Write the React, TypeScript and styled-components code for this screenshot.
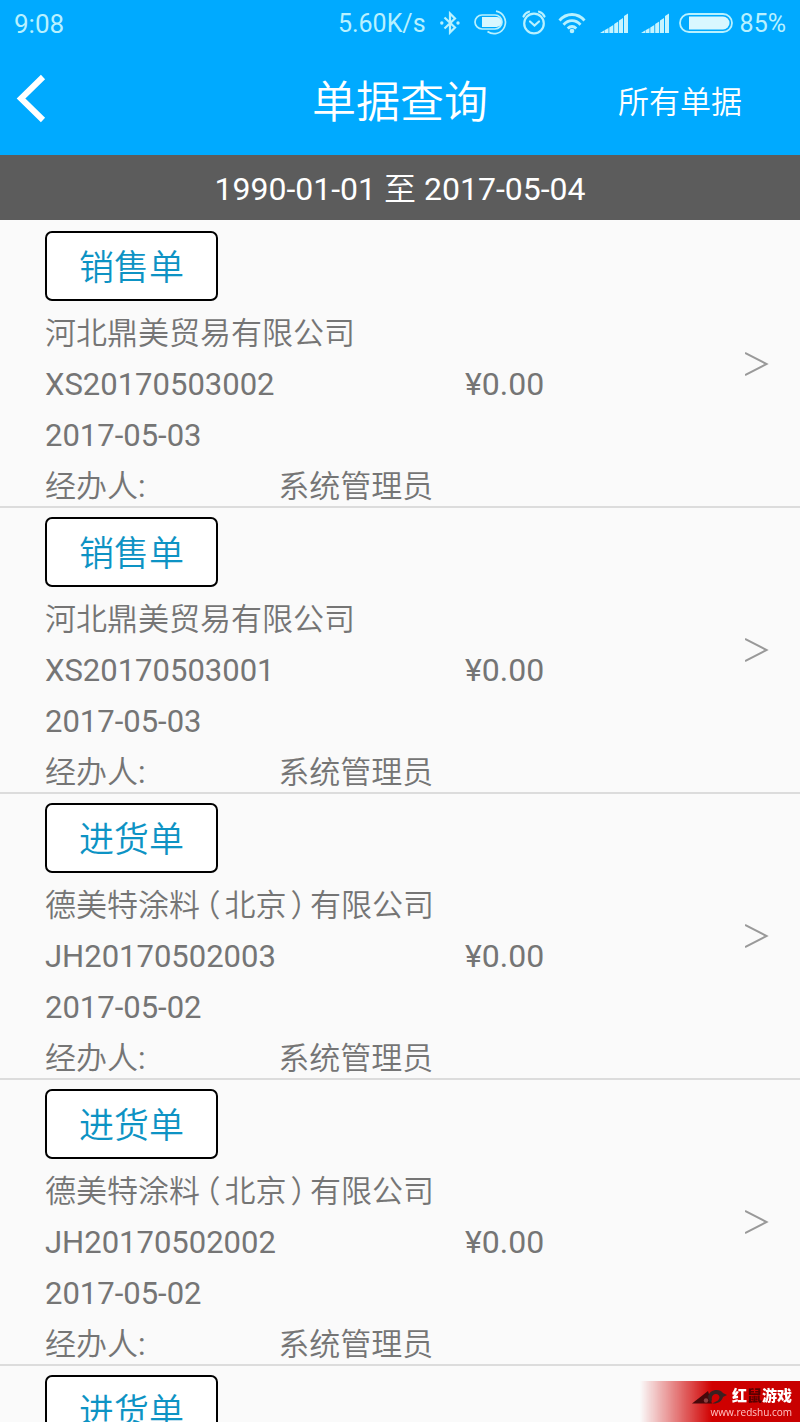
import React from "react";
import styled, { createGlobalStyle } from "styled-components";

const GlobalStyle = createGlobalStyle`
  * { box-sizing: border-box; }
  body { margin: 0; background: #fafafa; }
  button { font: inherit; color: inherit; border: 0; padding: 0; background: none; cursor: pointer; }
`;

const Screen = styled.div`
  display: flex;
  flex-direction: column;
  height: 100vh;
  overflow: hidden;
  font-family: Roboto, "Noto Sans CJK SC", sans-serif;
  font-size: 31px;
  color: #757575;
`;

const Header = styled.header`
  flex: none;
  background: #00aaff;
  color: #fff;
`;

const StatusBar = styled.div`
  display: flex;
  align-items: center;
  justify-content: space-between;
  height: 46px;
  padding: 0 14px;
  font-size: 25px;
  line-height: 44px;
  color: #b8f1ff;
`;

const StatusIcons = styled.div`
  display: flex;
  align-items: center;
  svg { display: block; }
`;

const Clock = styled.span`
  padding-top: 2px;
  font-size: 26px;
`;

const Speed = styled.span`
  margin-right: 14px;
  padding-top: 2px;
`;

const Percent = styled.span`
  margin-left: 7px;
  padding-top: 2px;
`;

const IconGap = styled.span<{ $right: number }>`
  margin-right: ${(p) => p.$right}px;
`;

const TitleBar = styled.div`
  display: grid;
  grid-template-columns: 1fr auto 1fr;
  align-items: center;
  height: 109px;
  padding: 4px 58px 0 16px;
`;

const BackButton = styled.button`
  justify-self: start;
  width: 32px;
  height: 52px;
  margin-bottom: 10px;
  svg { display: block; }
`;

const Title = styled.h1`
  margin: 0;
  padding-left: 42px;
  font-size: 44px;
  font-weight: 350;
  line-height: 64px;
`;

const FilterButton = styled.button`
  justify-self: end;
  font-weight: 350;
  line-height: 48px;
`;

const DateRange = styled.div`
  flex: none;
  height: 65px;
  background: #5c5c5c;
  color: #fff;
  font-size: 32px;
  line-height: 68px;
  text-align: center;
`;

const List = styled.ul`
  flex: 1;
  min-height: 0;
  margin: 0;
  padding: 2px 0 0;
  list-style: none;
  overflow-y: auto;
  scrollbar-width: none;
`;

const Row = styled.li`
  display: flex;
  align-items: center;
  padding: 9px 31px 0 45px;
  border-bottom: 2px solid #dcdcdc;
`;

const RowBody = styled.div`
  flex: 1;
  min-width: 0;
`;

const TypeButton = styled.button`
  display: block;
  height: 70px;
  margin-bottom: 7px;
  padding: 6px 32px 0;
  border: 2px solid #000;
  border-radius: 7px;
  background: #fff;
  color: #0d93c4;
  font-size: 35px;
  font-weight: 350;
  line-height: 60px;
`;

const Line = styled.div<{ $columns?: string }>`
  display: grid;
  grid-template-columns: ${(p) => p.$columns ?? "1fr"};
  line-height: 51px;
`;

const HandlerLine = styled(Line)`
  height: 45px;
`;

const Chinese = styled.span`
  font-weight: 350;
`;

const Amount = styled.span`
  font-size: 32px;
`;

const OpenParen = styled.span`
  padding: 0 4px 0 5px;
  font-feature-settings: "halt";
`;

const CloseParen = styled.span`
  padding: 0 4px;
  font-feature-settings: "halt";
`;

const OpenButton = styled.button`
  flex: none;
  width: 24px;
  height: 48px;
  margin-bottom: 10px;
  svg { display: block; }
`;

const Watermark = styled.aside`
  position: fixed;
  right: 0;
  bottom: 0;
  display: flex;
  justify-content: flex-end;
  width: 160px;
  height: 41px;
  padding: 6px 8px 0 0;
  background: linear-gradient(90deg, rgba(204, 0, 0, 0), #d00000 45%, #c80000);
  color: #fff;
  svg { flex: none; margin: 2px 4px 0 0; }
`;

const Brand = styled.div`
  font-size: 15px;
  font-weight: 900;
  line-height: 18px;
  white-space: nowrap;
  em { font-style: normal; color: #5a0000; }
`;

const BrandBlock = styled.div`
  display: flex;
  flex-direction: column;
  align-items: flex-end;
  width: 60px;
`;

const Site = styled.div`
  font-family: "Open Sans", sans-serif;
  font-size: 10px;
  line-height: 14px;
  white-space: nowrap;
  color: #ffc4c4;
`;

const BluetoothIcon = () => (
  <svg width="20" height="24" viewBox="0 0 20 24" fill="none" stroke="#b8f1ff" strokeWidth="2.200">
    <path d="M4.500 6.500 15 16.500 10 21.500V2.500l5 5L4.500 17.500" />
    <circle cx="1.800" cy="12" r="1.700" fill="#b8f1ff" stroke="none" />
    <circle cx="18" cy="12" r="1.700" fill="#b8f1ff" stroke="none" />
  </svg>
);

const SaverIcon = () => (
  <svg width="34" height="26" viewBox="0 0 34 26" fill="none" stroke="#b8f1ff" strokeWidth="1.700">
    <rect x="1" y="5" width="27" height="14" rx="7" />
    <path d="M8 7h14.500a5 5 0 0 1 0 10H8z" fill="#d9f7ff" stroke="none" />
    <path d="M22 1.200A11.300 11.300 0 1 1 13.500 21.500" />
  </svg>
);

const AlarmIcon = () => (
  <svg width="24" height="26" viewBox="0 0 24 26" fill="none" stroke="#b8f1ff" strokeWidth="2.200" strokeLinecap="round">
    <circle cx="12" cy="13.500" r="9.800" />
    <path d="m8 11.500 4.500 4 4.500-4M1.500 6.500C2.500 4 4.500 2.300 7 1.700M22.500 6.500C21.500 4 19.500 2.300 17 1.700" />
  </svg>
);

const WifiIcon = () => (
  <svg width="28" height="22" viewBox="0 0 28 22" fill="none" stroke="#b8f1ff" strokeWidth="2.800">
    <path d="M1.500 8.500C8.500 .5 19.500 .5 26.500 8.500M5.500 12.700c5-5.400 12-5.400 17 0M9.700 16.500c2.700-2.700 5.900-2.700 8.600 0" />
    <circle cx="14" cy="19" r="2.300" fill="#b8f1ff" stroke="none" />
  </svg>
);

const SignalIcon = () => (
  <svg width="28" height="20" viewBox="0 0 28 20" fill="#c6f4ff">
    <path d="M0 20 4 17.500V20zM4.500 17.200l4-2.200v5h-4zM9.300 14.500l4-2.500v8h-4zM14.200 11l4-2.500V20h-4zM19 7.500l4-2.500v15h-4zM24 3l4-2.500V20h-4z" />
  </svg>
);

const BatteryIcon = () => (
  <svg width="54" height="20" viewBox="0 0 54 20" fill="none">
    <rect x="1" y="1" width="52" height="18" rx="9" stroke="#b8f1ff" strokeWidth="1.800" />
    <path d="M10 3.500h34a6.500 6.500 0 0 1 0 13H10z" fill="#d9f7ff" />
  </svg>
);

const MouseLogo = () => (
  <svg width="36" height="18" viewBox="0 0 36 18">
    <path d="M0 14.500 16 2l4 12.500z" fill="#46080a" />
    <path d="M16 8C17 0 28 -1 31 4l4 2-4 2c-1 4-5 7-11 6.500l6-3c3-3 1-6.500-2-6.500s-5 3-4 6l-2 3z" fill="#3b2020" />
    <circle cx="14" cy="11.500" r="2.200" fill="#8d4040" />
  </svg>
);

interface Bill {
  type: string;
  company: string;
  code: string;
  date: string;
}

const bills: Bill[] = [
  { type: "销售单", company: "河北鼎美贸易有限公司", code: "XS20170503002", date: "2017-05-03" },
  { type: "销售单", company: "河北鼎美贸易有限公司", code: "XS20170503001", date: "2017-05-03" },
  { type: "进货单", company: "德美特涂料（北京）有限公司", code: "JH20170502003", date: "2017-05-02" },
  { type: "进货单", company: "德美特涂料（北京）有限公司", code: "JH20170502002", date: "2017-05-02" },
  { type: "进货单", company: "德美特涂料（北京）有限公司", code: "JH20170502001", date: "2017-05-02" },
];

const CompanyName = ({ name }: { name: string }) => (
  <Chinese>
    {name.split(/([（）])/).map((part, i) => {
      if (part === "（") return <OpenParen key={i}>{part}</OpenParen>;
      if (part === "）") return <CloseParen key={i}>{part}</CloseParen>;
      return part;
    })}
  </Chinese>
);

const BillRow = ({ bill }: { bill: Bill }) => (
  <Row>
    <RowBody>
      <TypeButton type="button">{bill.type}</TypeButton>
      <Line><CompanyName name={bill.company} /></Line>
      <Line $columns="3fr 2fr">
        <span>{bill.code}</span>
        <Amount>¥0.00</Amount>
      </Line>
      <Line>{bill.date}</Line>
      <HandlerLine $columns="1fr 2fr">
        <span><Chinese>经办人</Chinese>:</span>
        <Chinese>系统管理员</Chinese>
      </HandlerLine>
    </RowBody>
    <OpenButton type="button" aria-label={`查看 ${bill.code}`}>
      <svg width="24" height="48" viewBox="0 0 24 48" fill="none" stroke="#999" strokeWidth="2">
        <path d="M0 13 21.500 24 0 35" />
      </svg>
    </OpenButton>
  </Row>
);

export default function App() {
  return (
    <Screen>
      <GlobalStyle />
      <Header>
        <StatusBar>
          <Clock>9:08</Clock>
          <StatusIcons>
            <Speed>5.60K/s</Speed>
            <IconGap $right={14}><BluetoothIcon /></IconGap>
            <IconGap $right={14}><SaverIcon /></IconGap>
            <IconGap $right={12}><AlarmIcon /></IconGap>
            <IconGap $right={14}><WifiIcon /></IconGap>
            <IconGap $right={13}><SignalIcon /></IconGap>
            <IconGap $right={10}><SignalIcon /></IconGap>
            <BatteryIcon />
            <Percent>85%</Percent>
          </StatusIcons>
        </StatusBar>
        <TitleBar>
          <BackButton type="button" aria-label="返回">
            <svg width="32" height="52" viewBox="0 0 32 52" fill="none" stroke="#fff" strokeWidth="6">
              <path d="M27 5 5 26.500 27 48" />
            </svg>
          </BackButton>
          <Title>单据查询</Title>
          <FilterButton type="button">所有单据</FilterButton>
        </TitleBar>
      </Header>
      <DateRange>
        1990-01-01 <Chinese>至</Chinese> 2017-05-04
      </DateRange>
      <List>
        {bills.map((bill) => (
          <BillRow key={bill.code} bill={bill} />
        ))}
      </List>
      <Watermark>
        <MouseLogo />
        <BrandBlock>
          <Brand>
            红<em>鼠</em>游戏
          </Brand>
          <Site>www.redshu.com</Site>
        </BrandBlock>
      </Watermark>
    </Screen>
  );
}
